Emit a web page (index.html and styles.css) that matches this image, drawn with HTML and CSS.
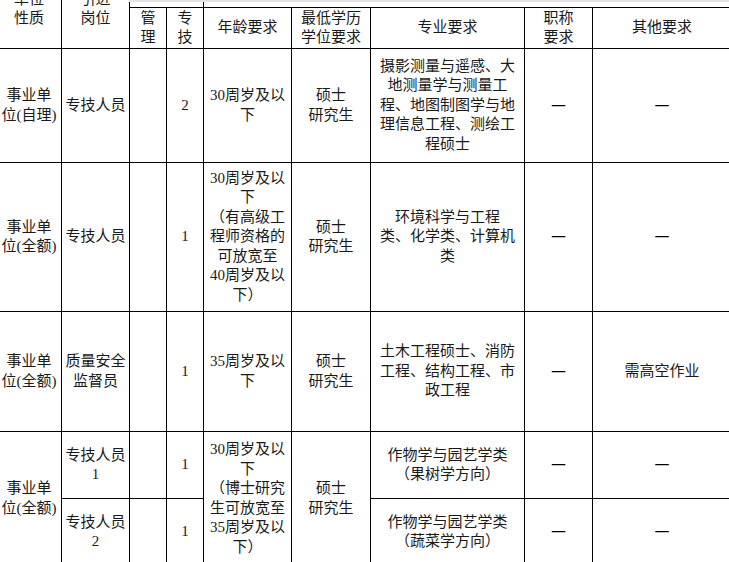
FILE: index.html
```html
<!DOCTYPE html>
<html lang="zh-CN">
<head>
<meta charset="utf-8">
<title>岗位表</title>
<link rel="stylesheet" href="styles.css">
</head>
<body>
<div class="viewport">
  <div class="top-band"></div>
  <table class="jobs">
    <colgroup>
      <col class="c-unit">
      <col class="c-post">
      <col class="c-num">
      <col class="c-num">
      <col class="c-age">
      <col class="c-edu">
      <col class="c-major">
      <col class="c-title">
      <col class="c-other">
    </colgroup>
    <thead>
      <tr class="h1">
        <th rowspan="2">单位<br>性质</th>
        <th rowspan="2">引进<br>岗位</th>
        <th colspan="2" class="group">岗位数</th>
        <th colspan="5" class="group">岗位条件</th>
      </tr>
      <tr class="h2">
        <th>管<br>理</th>
        <th>专<br>技</th>
        <th>年龄要求</th>
        <th>最低学历<br>学位要求</th>
        <th>专业要求</th>
        <th>职称<br>要求</th>
        <th>其他要求</th>
      </tr>
    </thead>
    <tbody>
      <tr class="r1">
        <td>事业单<br>位(自理)</td>
        <td>专技人员</td>
        <td></td>
        <td>2</td>
        <td>30周岁及以<br>下</td>
        <td>硕士<br>研究生</td>
        <td>摄影测量与遥感、大<br>地测量学与测量工<br>程、地图制图学与地<br>理信息工程、测绘工<br>程硕士</td>
        <td class="dash">—</td>
        <td class="dash">—</td>
      </tr>
      <tr class="r2">
        <td>事业单<br>位(全额)</td>
        <td>专技人员</td>
        <td></td>
        <td>1</td>
        <td>30周岁及以<br>下<br>（有高级工<br>程师资格的<br>可放宽至<br>40周岁及以<br>下）</td>
        <td>硕士<br>研究生</td>
        <td>环境科学与工程<br>类、化学类、计算机<br>类</td>
        <td class="dash">—</td>
        <td class="dash">—</td>
      </tr>
      <tr class="r3">
        <td>事业单<br>位(全额)</td>
        <td>质量安全<br>监督员</td>
        <td></td>
        <td>1</td>
        <td>35周岁及以<br>下</td>
        <td>硕士<br>研究生</td>
        <td>土木工程硕士、消防<br>工程、结构工程、市<br>政工程</td>
        <td class="dash">—</td>
        <td>需高空作业</td>
      </tr>
      <tr class="r4">
        <td rowspan="2">事业单<br>位(全额)</td>
        <td>专技人员<br>1</td>
        <td></td>
        <td>1</td>
        <td rowspan="2">30周岁及以<br>下<br>（博士研究<br>生可放宽至<br>35周岁及以<br>下）</td>
        <td rowspan="2">硕士<br>研究生</td>
        <td>作物学与园艺学类<br>（果树学方向）</td>
        <td class="dash">—</td>
        <td class="dash">—</td>
      </tr>
      <tr class="r5">
        <td>专技人员<br>2</td>
        <td></td>
        <td>1</td>
        <td>作物学与园艺学类<br>（蔬菜学方向）</td>
        <td class="dash">—</td>
        <td class="dash">—</td>
      </tr>
    </tbody>
  </table>
</div>
</body>
</html>
```
FILE: styles.css
```css
html, body {
  margin: 0;
  padding: 0;
  background: #ffffff;
}

.viewport {
  position: relative;
  width: 729px;
  height: 562px;
  overflow: hidden;
}

.top-band {
  position: absolute;
  top: 0;
  left: 129px;
  right: 0;
  height: 2px;
  background: #e2e2e2;
  z-index: 2;
}

.jobs {
  table-layout: fixed;
  border-collapse: collapse;
  width: 735px;
  margin: -31px 0 0 -4px;
  font-family: "Liberation Serif", "Noto Sans CJK SC", serif;
  font-size: 15px;
  line-height: 19.5px;
  color: #1a1a1a;
}

.c-unit { width: 65px; }
.c-post { width: 68px; }
.c-num { width: 37px; }
.c-age { width: 88px; }
.c-edu { width: 79px; }
.c-major { width: 154px; }
.c-title { width: 68px; }
.c-other { width: 139px; }

.jobs th,
.jobs td {
  border: 1px solid #000;
  padding: 0 2px;
  text-align: center;
  vertical-align: middle;
  font-weight: normal;
  white-space: nowrap;
  overflow: hidden;
}

.jobs th.group {
  vertical-align: top;
}

.jobs td.dash {
  font-family: "DejaVu Sans", "Noto Sans CJK SC", sans-serif;
  font-size: 15px;
  color: #000;
}

.h1 { height: 38px; }
.h2 { height: 41px; }
.r1 { height: 114px; }
.r2 { height: 149px; }
.r3 { height: 120px; }
.r4 { height: 67px; }
.r5 { height: 67px; }
```
